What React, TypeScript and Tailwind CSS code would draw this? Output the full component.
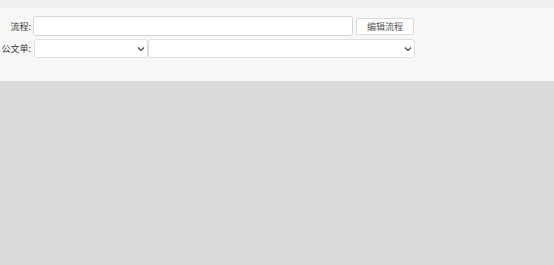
import React from "react";

function Chevron() {
  return (
    <svg
      width="8"
      height="5"
      viewBox="0 0 8 5"
      className="pointer-events-none absolute right-[3px] top-1/2 -translate-y-1/2"
    >
      <path d="M1 1l3 3 3-3" fill="none" stroke="#444" strokeWidth="1.2" />
    </svg>
  );
}

export default function App() {
  const font = { fontFamily: '"Noto Sans CJK SC", "Noto Sans", sans-serif' };
  return (
    <div className="flex min-h-screen flex-col bg-[#d9dadb]" style={font}>
      <div className="h-[8px] bg-[#efefef]" />
      <div className="h-[73px] bg-[#f7f7f7] pt-[8px]">
        {/* 流程 row */}
        <div className="flex items-center">
          <label className="w-[31px] text-right text-[9px] leading-none text-[#3a3a3a]">
            流程:
          </label>
          <input
            className="ml-[2px] h-[20px] w-[320px] rounded-[3px] border border-[#d6d6d6] bg-white outline-none"
            type="text"
          />
          <button className="ml-[3px] h-[17px] w-[58px] rounded-[2px] border border-[#dcdcdc] bg-white text-[9px] leading-none text-[#555]">
            编辑流程
          </button>
        </div>
        {/* 公文单 row */}
        <div className="mt-[3px] flex items-center">
          <label className="w-[31px] text-right text-[9px] leading-none text-[#3a3a3a]">
            公文单:
          </label>
          <div className="relative ml-[3px] h-[19px] w-[114px]">
            <select className="h-full w-full appearance-none rounded-[3px] border border-[#e0e0e0] bg-white outline-none" />
            <Chevron />
          </div>
          <div className="relative h-[19px] w-[267px]">
            <select className="h-full w-full appearance-none rounded-[3px] border border-[#e0e0e0] bg-white outline-none" />
            <Chevron />
          </div>
        </div>
      </div>
      <div className="flex-1" />
    </div>
  );
}
